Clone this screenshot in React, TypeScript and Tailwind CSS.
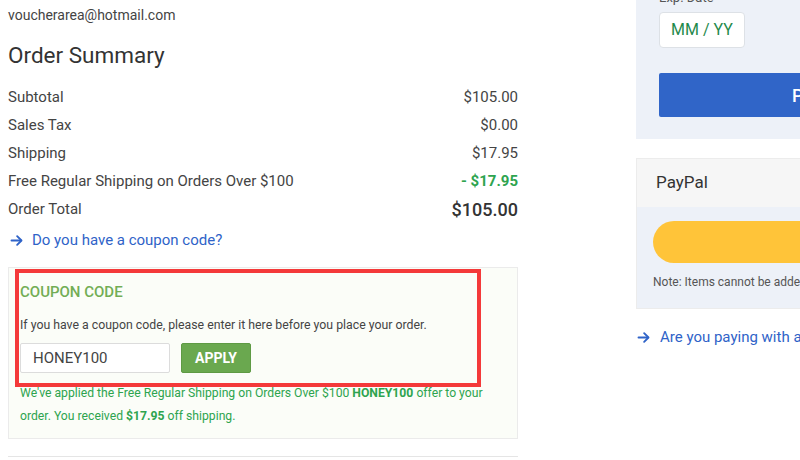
import React from 'react';

const ArrowRight = ({ className }: { className?: string }) => (
  <svg viewBox="0 0 24 24" className={className} fill="none" stroke="currentColor" strokeWidth={3} strokeLinecap="round" strokeLinejoin="round">
    <path d="M4 12h15" />
    <path d="M13 5l7 7-7 7" />
  </svg>
);

const App = () => {
  const rows = [
    { label: 'Subtotal', value: '$105.00' },
    { label: 'Sales Tax', value: '$0.00' },
    { label: 'Shipping', value: '$17.95' },
  ];

  return (
    <div className="w-[800px] h-[460px] overflow-hidden bg-white font-['Roboto',sans-serif]">
      <div className="flex">
        {/* Order summary column */}
        <div className="w-[510px] ml-2 shrink-0">
          <div className="pt-[5px] text-[14px] text-[#444]">voucherarea@hotmail.com</div>
          <h2 className="mt-[15px] text-[22.5px] leading-[28px] text-[#333]">Order Summary</h2>

          <div className="mt-[14px] text-[15px] text-[#444]">
            {rows.map((row) => (
              <div key={row.label} className="flex justify-between h-[28px] items-center">
                <span>{row.label}</span>
                <span>{row.value}</span>
              </div>
            ))}
            <div className="flex justify-between h-[28px] items-center">
              <span>Free Regular Shipping on Orders Over $100</span>
              <span className="font-bold text-[#2ea44f]">- $17.95</span>
            </div>
            <div className="flex justify-between h-[28px] items-center">
              <span>Order Total</span>
              <span className="text-[18px] font-medium text-[#333]">$105.00</span>
            </div>
          </div>

          <div className="mt-[6px] flex items-center text-[15px] text-[#2f63c8]">
            <ArrowRight className="w-[15px] h-[15px] ml-[1px] mr-[8px]" />
            <span>Do you have a coupon code?</span>
          </div>

          {/* Coupon box */}
          <div className="relative mt-[15px] border border-[#ebebeb] bg-[#fbfdf8] px-[11px] pt-[13px] pb-[10px]">
            <div className="text-[15px] font-medium text-[#72ad55]">COUPON CODE</div>
            <p className="mt-[13px] text-[12.3px] text-[#444]">If you have a coupon code, please enter it here before you place your order.</p>
            <div className="mt-[9px] flex gap-[11px]">
              <div className="w-[150px] h-[30px] border border-[#dcdcdc] bg-white rounded-[2px] flex items-center pl-[12px] text-[15px] text-[#444]">HONEY100</div>
              <button className="w-[70px] h-[30px] bg-[#6aa84f] border border-[#5e9a44] rounded-[2px] text-white text-[14px] font-bold">APPLY</button>
            </div>
            <p className="mt-[9px] text-[12.2px] leading-[23px] text-[#2ea44f]">
              We've applied the Free Regular Shipping on Orders Over $100 <b>HONEY100</b> offer to your order. You received <b>$17.95</b> off shipping.
            </p>
            <div className="absolute left-[6px] top-[1px] w-[466px] h-[118px] border-4 border-[#f4393a]" />
          </div>

          <div className="mt-[17px] border-t border-[#e5e5e5]" />
        </div>

        {/* Payment column */}
        <div className="ml-[118px] w-[406px] shrink-0 -mt-[10px]">
          <div className="bg-[#edf1f8] px-[23px] pb-[22px]">
            <div className="text-[13px] text-[#555] leading-[16px]">Exp. Date</div>
            <div className="mt-[6px] w-[86px] h-[36px] bg-white border border-[#dde1e6] rounded-[4px] flex items-center justify-center text-[16px] text-[#1f8a4c]">MM / YY</div>
            <div className="mt-[25px] h-[44px] bg-[#3065c8] rounded-[2px] flex items-center justify-center text-white text-[18px] font-medium">Place Order</div>
          </div>

          <div className="mt-[19px] border border-[#ececec]">
            <div className="bg-[#f6f6f6] h-[48px] flex items-center pl-[19px] text-[17px] text-[#333]">PayPal</div>
            <div className="bg-[#edf1f8] px-[16px] pt-[14px] pb-[17px]">
              <div className="h-[42px] rounded-full bg-[#ffc439]" />
              <p className="mt-[10px] text-[12px] text-[#555]">Note: Items cannot be added after placing your order with PayPal.</p>
            </div>
          </div>

          <div className="mt-[17px] flex items-center text-[15px] text-[#2f63c8]">
            <ArrowRight className="w-[15px] h-[15px] mr-[9px]" />
            <span>Are you paying with a gift card?</span>
          </div>
        </div>
      </div>
    </div>
  );
};

export default App;
